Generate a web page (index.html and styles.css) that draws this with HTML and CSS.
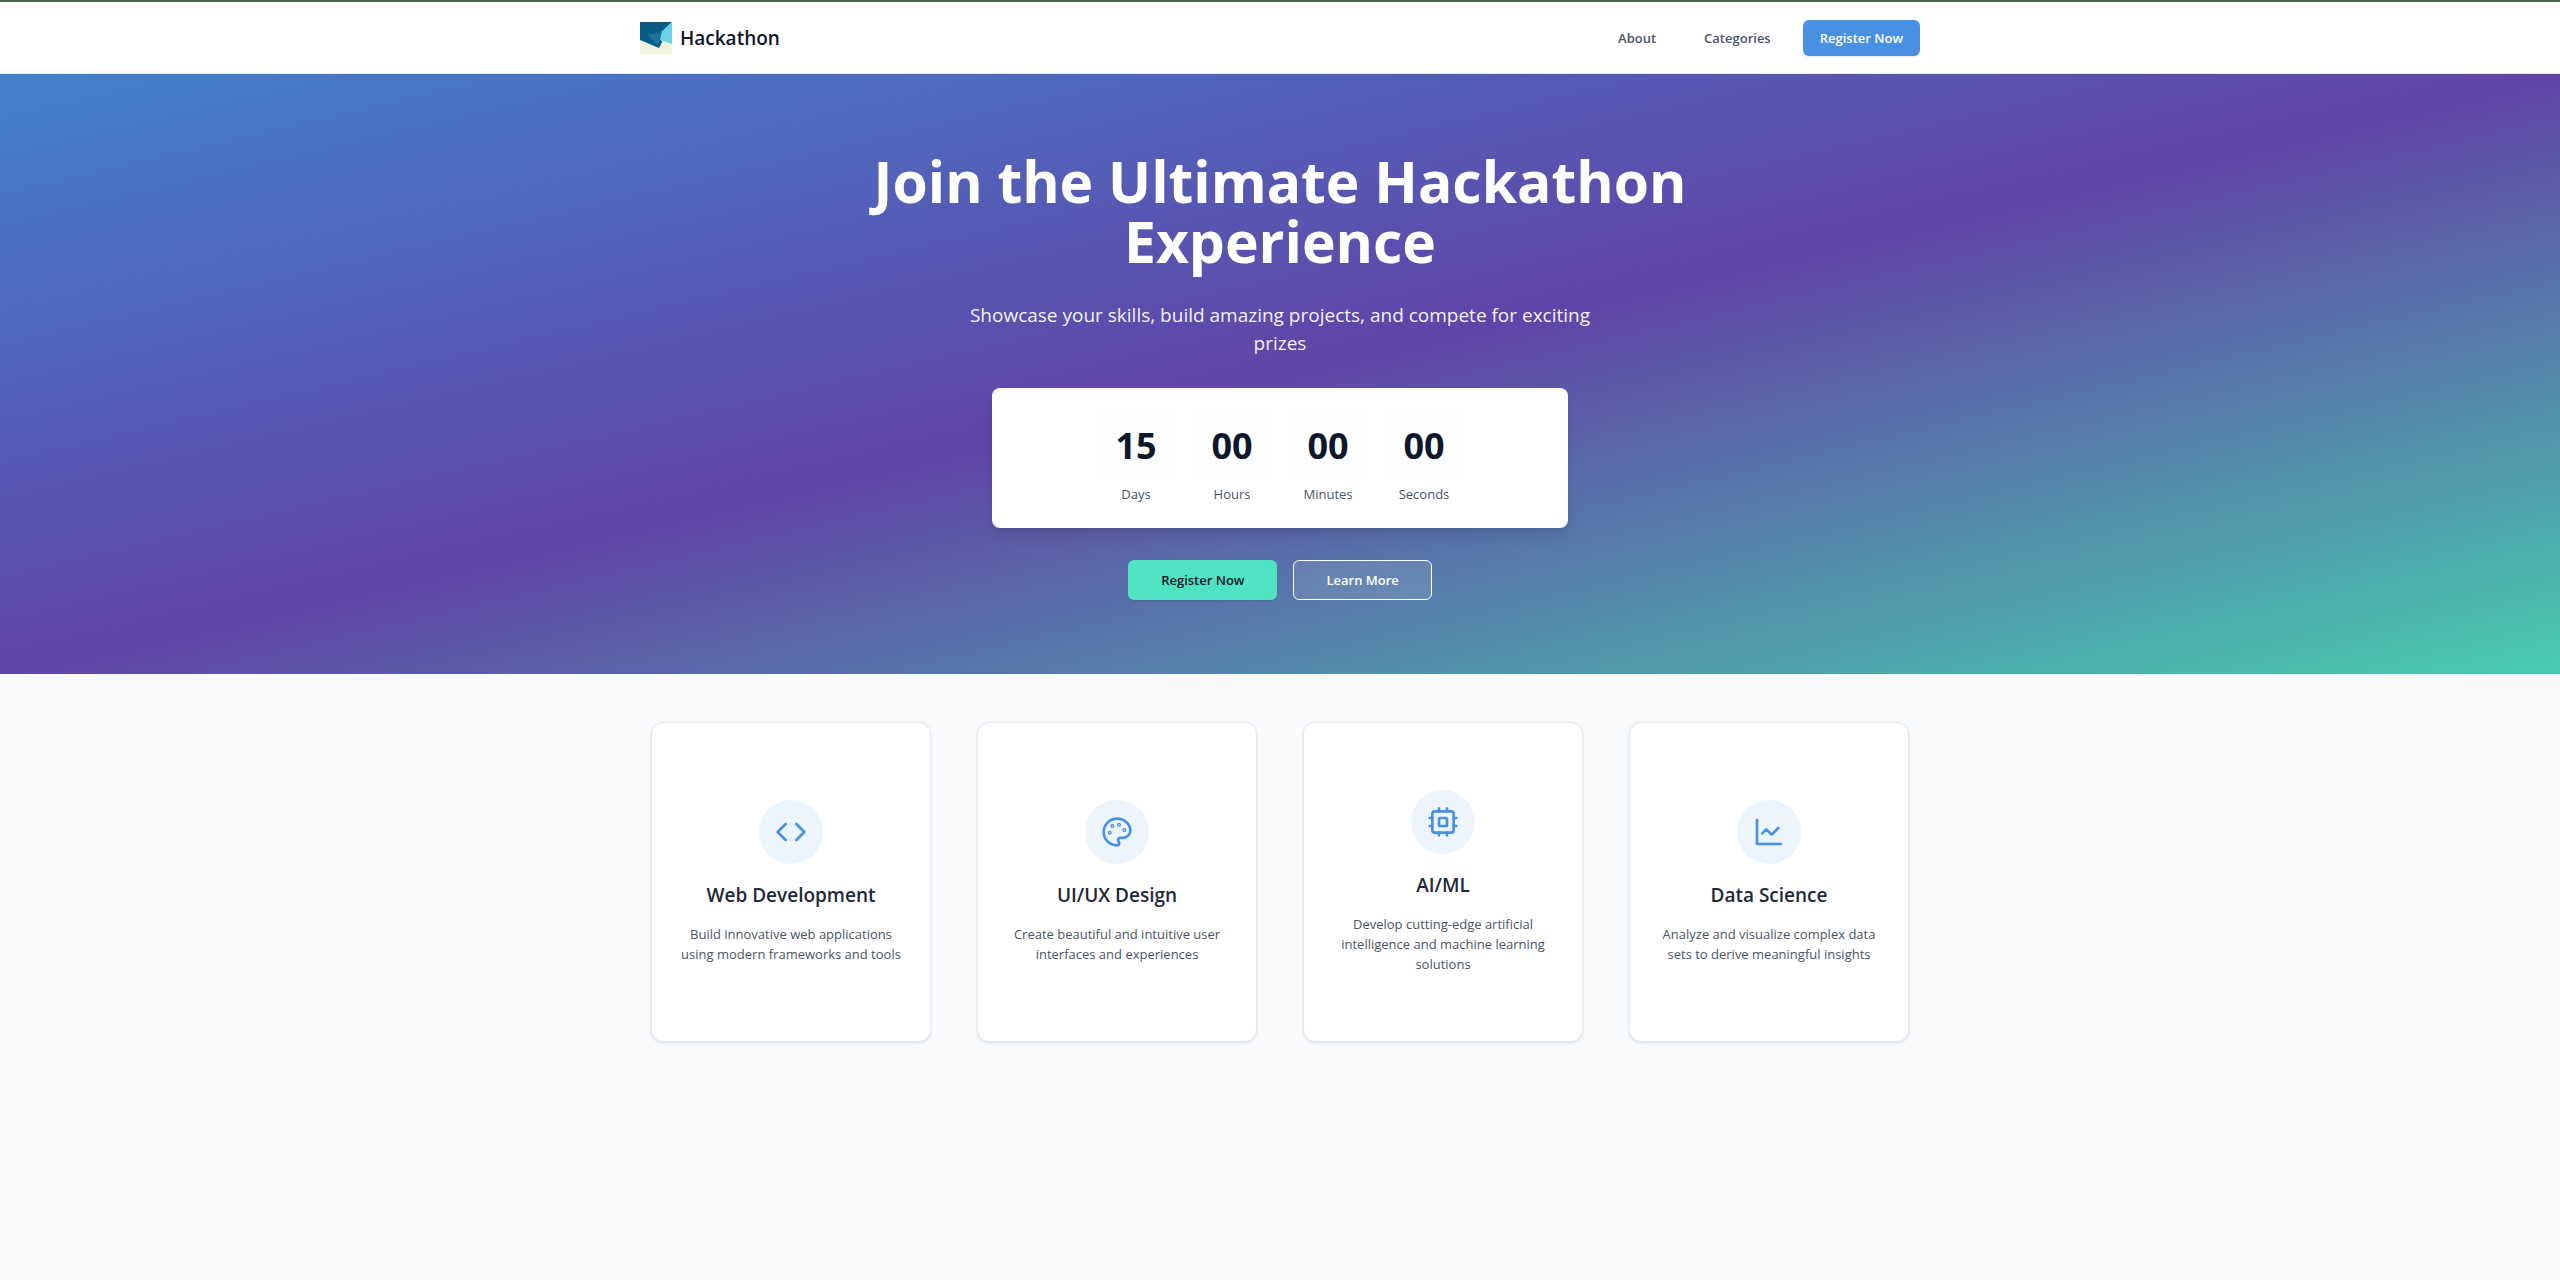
FILE: index.html
```html
<!DOCTYPE html>
<html lang="en">
<head>
<meta charset="utf-8">
<meta name="viewport" content="width=device-width, initial-scale=1">
<title>Hackathon</title>
<link rel="stylesheet" href="styles.css">
</head>
<body>
<header class="site-header">
  <div class="header-inner">
    <a class="brand" href="#">
      <svg class="brand-logo" viewBox="0 0 32 32" aria-hidden="true">
        <rect width="32" height="32" fill="#eff2dc"/>
        <path d="M0 0h32L20 12l2 8-3 6L0 18z" fill="#0b5c82"/>
        <path d="M32 0v22l-12-4 1-8z" fill="#69d2e7"/>
        <path d="M8 13l14-3-3 10-2 3z" fill="#1f729a"/>
      </svg>
      <span>Hackathon</span>
    </a>
    <nav class="nav">
      <a class="nav-link" href="#about">About</a>
      <a class="nav-link" href="#categories">Categories</a>
      <button class="btn btn-nav" type="button">Register Now</button>
    </nav>
  </div>
</header>
<main>
  <section class="hero" id="about">
    <h1 class="hero-title">Join the Ultimate Hackathon Experience</h1>
    <p class="hero-text">Showcase your skills, build amazing projects, and compete for exciting prizes</p>
    <div class="countdown">
      <div class="unit"><div class="unit-value">15</div><div class="unit-label">Days</div></div>
      <div class="unit"><div class="unit-value">00</div><div class="unit-label">Hours</div></div>
      <div class="unit"><div class="unit-value">00</div><div class="unit-label">Minutes</div></div>
      <div class="unit"><div class="unit-value">00</div><div class="unit-label">Seconds</div></div>
    </div>
    <div class="hero-actions">
      <button class="btn btn-primary" type="button">Register Now</button>
      <button class="btn btn-outline" type="button">Learn More</button>
    </div>
  </section>
  <section class="categories" id="categories">
    <article class="card">
      <div class="card-icon">
        <svg viewBox="0 0 24 24" aria-hidden="true"><path d="m16 18 6-6-6-6M8 6l-6 6 6 6"/></svg>
      </div>
      <h2 class="card-title">Web Development</h2>
      <p class="card-text">Build innovative web applications using modern frameworks and tools</p>
    </article>
    <article class="card">
      <div class="card-icon">
        <svg viewBox="0 0 24 24" aria-hidden="true"><circle cx="13.5" cy="6.5" r=".5"/><circle cx="17.5" cy="10.5" r=".5"/><circle cx="8.5" cy="7.5" r=".5"/><circle cx="6.5" cy="12.5" r=".5"/><path d="M12 2C6.5 2 2 6.5 2 12s4.500 10 10 10c.926 0 1.648-.746 1.648-1.688 0-.437-.180-.835-.437-1.125-.290-.289-.438-.652-.438-1.125a1.640 1.640 0 0 1 1.668-1.668h1.996c3.051 0 5.555-2.503 5.555-5.554C21.965 6.012 17.461 2 12 2z"/></svg>
      </div>
      <h2 class="card-title">UI/UX Design</h2>
      <p class="card-text">Create beautiful and intuitive user interfaces and experiences</p>
    </article>
    <article class="card">
      <div class="card-icon">
        <svg viewBox="0 0 24 24" aria-hidden="true"><rect x="4" y="4" width="16" height="16" rx="2"/><rect x="9" y="9" width="6" height="6" rx="1"/><path d="M15 2v2M15 20v2M2 15h2M2 9h2M20 15h2M20 9h2M9 2v2M9 20v2"/></svg>
      </div>
      <h2 class="card-title">AI/ML</h2>
      <p class="card-text">Develop cutting-edge artificial intelligence and machine learning solutions</p>
    </article>
    <article class="card">
      <div class="card-icon">
        <svg viewBox="0 0 24 24" aria-hidden="true"><path d="M3 3v18h18"/><path d="m19 9-5 5-4-4-3 3"/></svg>
      </div>
      <h2 class="card-title">Data Science</h2>
      <p class="card-text">Analyze and visualize complex data sets to derive meaningful insights</p>
    </article>
  </section>
</main>
</body>
</html>
```
FILE: styles.css
```css
* {
  box-sizing: border-box;
}

body {
  margin: 0;
  background: #f9fafc;
  color: #0f172a;
  font-family: "Open Sans", "Noto Sans", sans-serif;
  font-size: 13px;
  line-height: 20px;
}

h1,
h2,
p {
  margin: 0;
}

.site-header {
  background: #fff;
  border-top: 2px solid #4b684f;
  border-bottom: 1px solid #e2e8f0;
}

.header-inner {
  display: flex;
  align-items: center;
  justify-content: space-between;
  max-width: 1280px;
  margin: 0 auto;
  padding: 18px 0 17px;
}

.brand {
  display: flex;
  align-items: center;
  gap: 8px;
  color: #0f172a;
  font-size: 19px;
  font-weight: 600;
  line-height: 28px;
  text-decoration: none;
}

.brand-logo {
  width: 32px;
  height: 32px;
}

.nav {
  display: flex;
  align-items: center;
  gap: 16px;
}

.nav-link {
  padding: 8px 16px;
  color: #4b5563;
  font-weight: 600;
  text-decoration: none;
}

.btn {
  border: 0;
  border-radius: 6px;
  font-family: inherit;
  font-size: 13px;
  font-weight: 600;
  line-height: 20px;
  cursor: pointer;
}

.btn-nav {
  padding: 8px 17px;
  background: #4a90e2;
  color: #fff;
  box-shadow: 0 1px 2px rgba(0, 0, 0, 0.1);
}

.hero {
  display: flex;
  flex-direction: column;
  align-items: center;
  padding: 77px 16px 74px;
  background:
    linear-gradient(rgba(0, 0, 0, 0.1), rgba(0, 0, 0, 0.1)),
    linear-gradient(to bottom right, #4a90e2, #6b4cba, #50e3c2);
  color: #fff;
  text-align: center;
}

.hero-title {
  max-width: 896px;
  font-size: 57px;
  font-weight: 700;
  line-height: 60px;
}

.hero-text {
  max-width: 672px;
  margin: 30px 0 31px;
  color: rgba(255, 255, 255, 0.95);
  font-size: 19px;
  line-height: 28px;
}

.countdown {
  display: flex;
  justify-content: center;
  gap: 16px;
  width: 100%;
  max-width: 576px;
  padding: 24px;
  border-radius: 8px;
  background: #fff;
  box-shadow: 0 10px 15px -3px rgba(0, 0, 0, 0.1), 0 4px 6px -4px rgba(0, 0, 0, 0.1);
}

.unit {
  width: 80px;
}

.unit-value {
  padding: 14px 12px 10px;
  border-radius: 8px;
  background: #fdfffe;
  color: #0f172a;
  font-size: 36px;
  font-weight: 700;
  line-height: 40px;
}

.unit-label {
  margin-top: 8px;
  color: #4b5563;
}

.hero-actions {
  display: flex;
  gap: 16px;
  margin-top: 32px;
}

.btn-primary {
  padding: 10px 33px;
  background: #50e3c2;
  color: #0f172a;
  box-shadow: 0 1px 2px rgba(0, 0, 0, 0.1);
}

.btn-outline {
  padding: 9px 32px;
  border: 1px solid #fff;
  background: rgba(255, 255, 255, 0.1);
  color: #fff;
}

.categories {
  display: grid;
  grid-template-columns: repeat(4, 1fr);
  gap: 46px;
  max-width: 1258px;
  margin: 0 auto;
  padding: 48px 0;
}

.card {
  display: flex;
  flex-direction: column;
  align-items: center;
  justify-content: center;
  min-height: 320px;
  padding: 24px;
  border: 1px solid #e2e8f0;
  border-radius: 12px;
  background: #fff;
  box-shadow: 0 1px 3px rgba(0, 0, 0, 0.1);
  text-align: center;
}

.card-icon {
  display: grid;
  place-items: center;
  width: 64px;
  height: 64px;
  border-radius: 50%;
  background: #edf4fc;
}

.card-icon svg {
  width: 32px;
  height: 32px;
  fill: none;
  stroke: #4a90e2;
  stroke-width: 2;
  stroke-linecap: round;
  stroke-linejoin: round;
}

.card-title {
  margin: 17px 0 15px;
  color: #1f2937;
  font-size: 19px;
  font-weight: 600;
  line-height: 28px;
}

.card-text {
  color: #4b5563;
}
```
